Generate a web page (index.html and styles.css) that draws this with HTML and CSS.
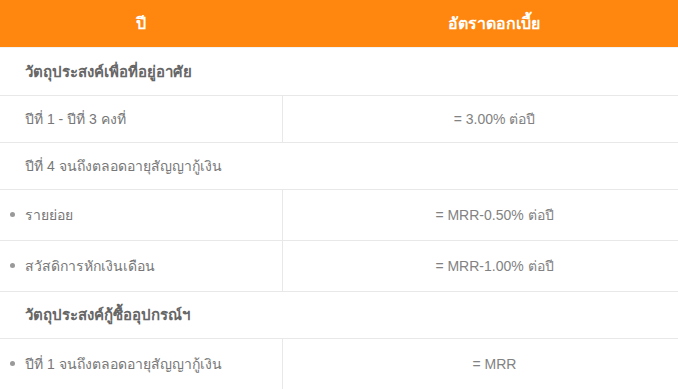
FILE: index.html
```html
<!DOCTYPE html>
<html lang="th">
<head>
<meta charset="utf-8">
<link rel="stylesheet" href="styles.css">
</head>
<body>
<div class="frame">
<div class="rates">
  <div class="row head">
    <div class="cell">ปี</div>
    <div class="cell">อัตราดอกเบี้ย</div>
  </div>
  <div class="row section first">
    <div class="cell full">วัตถุประสงค์เพื่อที่อยู่อาศัย</div>
  </div>
  <div class="row">
    <div class="cell label">ปีที่ 1 - ปีที่ 3 คงที่</div>
    <div class="cell value">= 3.00% ต่อปี</div>
  </div>
  <div class="row">
    <div class="cell label full">ปีที่ 4 จนถึงตลอดอายุสัญญากู้เงิน</div>
  </div>
  <div class="row tall">
    <div class="cell label"><span class="bullet">รายย่อย</span></div>
    <div class="cell value">= MRR-0.50% ต่อปี</div>
  </div>
  <div class="row tall">
    <div class="cell label"><span class="bullet">สวัสดิการหักเงินเดือน</span></div>
    <div class="cell value">= MRR-1.00% ต่อปี</div>
  </div>
  <div class="row section">
    <div class="cell full">วัตถุประสงค์กู้ซื้ออุปกรณ์ฯ</div>
  </div>
  <div class="row tall">
    <div class="cell label"><span class="bullet">ปีที่ 1 จนถึงตลอดอายุสัญญากู้เงิน</span></div>
    <div class="cell value">= MRR</div>
  </div>
</div>
</div>
</body>
</html>
```

FILE: styles.css
```css
html, body {
  margin: 0;
  padding: 0;
  background: #ffffff;
}

body {
  font-family: Tahoma, "Liberation Sans", "Noto Sans", sans-serif;
  font-size: 14px;
  color: #777777;
}

.frame {
  width: 678px;
  overflow: hidden;
}

.rates {
  width: 706px;
}

.row {
  display: grid;
  grid-template-columns: 282px 1fr;
  box-sizing: border-box;
  height: 47px;
  border-bottom: 1px solid #e8e8e8;
}

.row.tall {
  height: 51px;
}

.row.first {
  height: 49px;
  border-top: 1px solid #f3f3f3;
}

.cell {
  display: flex;
  align-items: center;
  min-width: 0;
}

.cell.full {
  grid-column: 1 / -1;
}

.row.head {
  height: 47px;
  border-bottom: none;
  background: #ff8710;
}

.row.head .cell {
  justify-content: center;
  color: #ffffff;
  font-weight: bold;
  font-size: 16px;
}

.label {
  padding-left: 25px;
}

.value {
  justify-content: center;
  border-left: 1px solid #e8e8e8;
  color: #828282;
}

.section .cell {
  padding-left: 25px;
  font-weight: bold;
  font-size: 15px;
  color: #666666;
}

.bullet {
  position: relative;
  display: inline-block;
}

.bullet::before {
  content: "";
  position: absolute;
  left: -15px;
  top: 50%;
  width: 5px;
  height: 5px;
  margin-top: -3px;
  border-radius: 50%;
  background: #999999;
}
```
